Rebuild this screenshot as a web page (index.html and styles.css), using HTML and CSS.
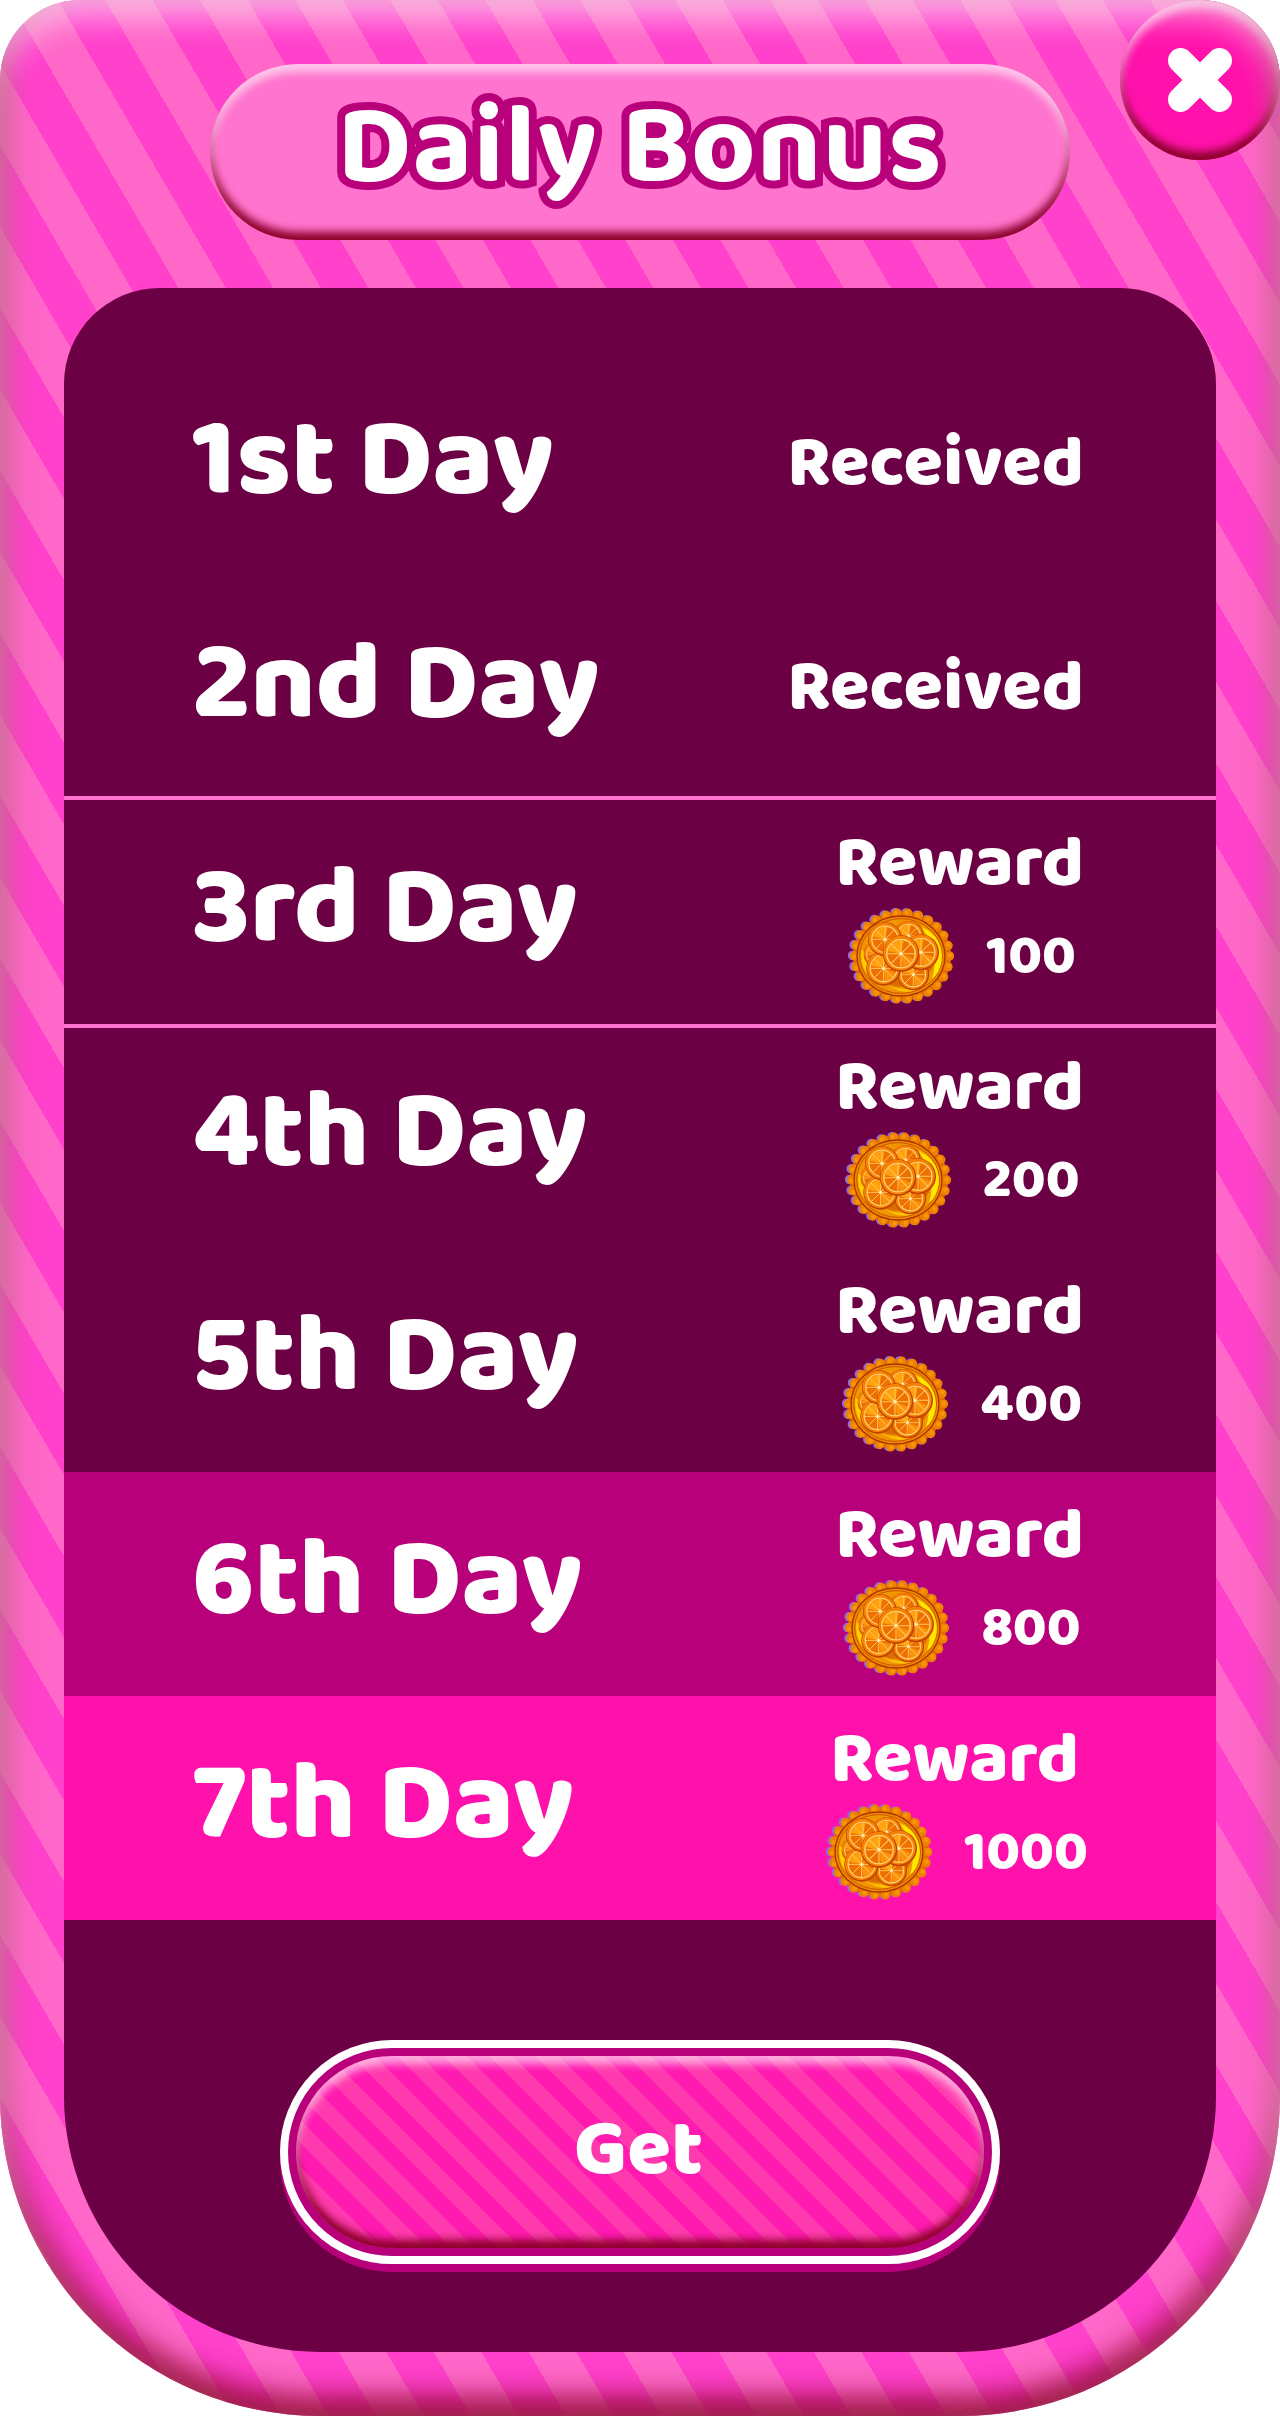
FILE: index.html
```html
<!DOCTYPE html>
<html lang="en">
<head>
<meta charset="utf-8">
<title>Daily Bonus</title>
<link rel="stylesheet" href="styles.css">
</head>
<body>
<svg class="sprite" aria-hidden="true">
  <symbol id="slice" viewBox="-54 -54 108 108">
    <circle r="53" fill="#c04000"/>
    <circle cx="-1" cy="-2" r="50" fill="#f58205"/>
    <circle r="41" fill="#ee7000" stroke="#ffd070" stroke-width="4"/>
    <path d="M-38-8A39 39 0 0 1 8-38L0 0Z" fill="#ffa00c"/>
    <path d="M0 0L36 14A39 39 0 0 1 6 38Z" fill="#fb920a"/>
    <path d="M0-40V40M-40 0H40M-29-29L29 29M29-29L-29 29" stroke="#ffc860" stroke-width="3"/>
    <circle r="5" fill="#ffe9a8"/>
  </symbol>
  <symbol id="tart" viewBox="27 24 320 288">
    <ellipse cx="184" cy="167" rx="142" ry="129" fill="none" stroke="#8c6ae6" stroke-width="29" stroke-linecap="round" pathLength="26" stroke-dasharray="0 1"/>
    <ellipse cx="190" cy="168" rx="146" ry="132" fill="#e87400"/>
    <ellipse cx="190" cy="168" rx="142" ry="129" fill="none" stroke="#ee8200" stroke-width="29" stroke-linecap="round" pathLength="26" stroke-dasharray="0 1"/>
    <ellipse cx="190" cy="168" rx="143" ry="130" fill="none" stroke="#f99608" stroke-width="13" stroke-linecap="round" pathLength="26" stroke-dasharray="0 1" stroke-dashoffset=".1"/>
    <ellipse cx="190" cy="168" rx="141" ry="128" fill="none" stroke="#d96200" stroke-width="14" pathLength="26" stroke-dasharray=".1 .9" stroke-dashoffset=".56"/>
    <ellipse cx="187" cy="168" rx="132" ry="120" fill="#ee8a00" stroke="#a83400" stroke-width="4"/>
    <ellipse cx="187" cy="168" rx="124" ry="112" fill="#f09604" stroke="#cf5600" stroke-width="3"/>
    <path d="M248 80Q316 112 309 182Q302 222 280 236Q305 158 248 80Z" fill="#ffe600"/>
    <path d="M68 150Q62 226 130 257Q94 225 84 160Z" fill="#ffcf00"/>
    <path d="M150 258Q200 278 262 252L240 268Q195 286 150 258Z" fill="#ffc400"/>
    <ellipse cx="187" cy="172" rx="100" ry="88" fill="#cf5600" opacity=".65"/>
    <use href="#slice" x="74" y="122" width="80" height="80"/>
    <use href="#slice" x="164" y="62" width="92" height="92"/>
    <use href="#slice" x="176" y="176" width="96" height="96"/>
    <use href="#slice" x="192" y="102" width="110" height="110"/>
    <use href="#slice" x="82" y="152" width="106" height="106"/>
    <use href="#slice" x="87" y="66" width="104" height="104"/>
    <use href="#slice" x="131" y="105" width="112" height="112"/>
  </symbol>
</svg>

<main class="card">
  <h1 class="title"><span class="title-text">Daily Bonus</span></h1>
  <button class="close" aria-label="Close">
    <svg class="close-icon" viewBox="0 0 64 64"><path d="M12.5 12.5L51.5 51.5M51.5 12.5L12.5 51.5" stroke="#fff" stroke-width="25" stroke-linecap="round"/></svg>
  </button>

  <section class="panel">
    <ul class="days">
      <li class="day"><span class="name">1st Day</span><span class="label">Received</span></li>
      <li class="day"><span class="name">2nd Day</span><span class="label">Received</span></li>
      <li class="day current"><span class="name">3rd Day</span>
        <div class="reward"><span class="label">Reward</span><div class="coins"><svg class="tart"><use href="#tart"/></svg><span class="amount">100</span></div></div></li>
      <li class="day"><span class="name">4th Day</span>
        <div class="reward"><span class="label">Reward</span><div class="coins"><svg class="tart"><use href="#tart"/></svg><span class="amount">200</span></div></div></li>
      <li class="day"><span class="name">5th Day</span>
        <div class="reward"><span class="label">Reward</span><div class="coins"><svg class="tart"><use href="#tart"/></svg><span class="amount">400</span></div></div></li>
      <li class="day sixth"><span class="name">6th Day</span>
        <div class="reward"><span class="label">Reward</span><div class="coins"><svg class="tart"><use href="#tart"/></svg><span class="amount">800</span></div></div></li>
      <li class="day seventh"><span class="name">7th Day</span>
        <div class="reward"><span class="label">Reward</span><div class="coins"><svg class="tart"><use href="#tart"/></svg><span class="amount">1000</span></div></div></li>
    </ul>
    <button class="get"><span class="get-face">Get</span></button>
  </section>
</main>
</body>
</html>
```
FILE: styles.css
```css
* { box-sizing: border-box; }

body {
  margin: 0;
  background: #fff;
  color: #fff;
  font-family: "Baloo 2", "Open Sans", "Noto Sans", sans-serif;
  font-weight: 800;
}

button {
  border: 0;
  padding: 0;
  color: inherit;
  font: inherit;
}

.sprite { position: absolute; width: 0; height: 0; }

.card {
  position: relative;
  display: flex;
  flex-direction: column;
  align-items: center;
  width: 1280px;
  height: 2416px;
  padding: 64px;
  border-radius: 80px 80px 320px 320px;
  background: repeating-linear-gradient(59.71deg, #ff67c9 0 37.6px, #ff41cc 37.6px 78.6px, #ff67c9 78.6px 82.05px);
}

/* Bevel of the card, drawn over the close button as well */
.card::after {
  content: "";
  position: absolute;
  inset: 0;
  border-radius: inherit;
  box-shadow: inset 0 16px 32px rgba(255, 255, 255, .6), inset 0 -16px 32px #8b0028;
  pointer-events: none;
}

.title {
  display: flex;
  justify-content: center;
  align-items: center;
  width: 860px;
  height: 176px;
  margin: 0 0 48px;
  padding-bottom: 6px;
  border-radius: 88px;
  background: #ff74ce;
  box-shadow: inset 0 8px 8px rgba(255, 255, 255, .6), inset 0 -8px 8px #8b0028;
}

.title-text {
  font-size: 112px;
  line-height: 1;
  letter-spacing: 1.1px;
  white-space: nowrap;
  -webkit-text-stroke: 16px #b8007a;
  paint-order: stroke fill;
}

.close {
  position: absolute;
  top: 0;
  right: 0;
  display: grid;
  place-items: center;
  width: 160px;
  height: 160px;
  border-radius: 50%;
  background: #ff12ab;
  box-shadow: inset 0 8px 8px rgba(255, 255, 255, .6), inset 0 -8px 8px #8b0028;
}

.close-icon { width: 64px; height: 64px; }

.panel {
  display: flex;
  flex-direction: column;
  align-items: center;
  width: 1152px;
  height: 2064px;
  padding-top: 64px;
  border-radius: 96px 96px 256px 256px;
  background: #6b0045;
}

.days {
  width: 100%;
  margin: 0 0 120px;
  padding: 0;
  list-style: none;
}

.day {
  display: flex;
  justify-content: space-between;
  align-items: center;
  height: 224px;
  padding: 0 128px;
}

.current { box-shadow: 0 0 0 4px #ff74ce; clip-path: inset(-4px 0); }
.sixth { background: #b8007a; }
.seventh { background: #ff12ab; }

.name {
  padding-bottom: 6px;
  font-size: 112px;
  line-height: 1;
  white-space: nowrap;
}

.label {
  padding-right: 4px;
  font-size: 72px;
  line-height: 1;
}

.reward {
  display: flex;
  flex-direction: column;
  align-items: center;
  gap: 8px;
  height: 100%;
  padding-top: 28px;
}

.coins {
  display: flex;
  align-items: center;
  gap: 31px;
}

.tart { width: 108px; height: 96px; }

.amount { padding-top: 1px; font-size: 56px; line-height: 1; }

.get {
  width: 720px;
  height: 224px;
  padding: 8px;
  border: 8px solid #fff;
  border-radius: 112px;
  background: #b8007a;
  box-shadow: 0 8px #b8007a;
}

.get-face {
  display: flex;
  justify-content: center;
  align-items: center;
  height: 100%;
  padding: 0 3px 3px 0;
  border-radius: 96px;
  font-size: 80px;
  line-height: 1;
  background: repeating-linear-gradient(45deg, #ff1ab0 0 11.96px, #ff3aae 11.96px 28.24px, #ff1ab0 28.24px 32.56px);
  box-shadow: inset 0 8px 8px rgba(255, 255, 255, .6), inset 0 -8px 8px #8b0028;
}
```
